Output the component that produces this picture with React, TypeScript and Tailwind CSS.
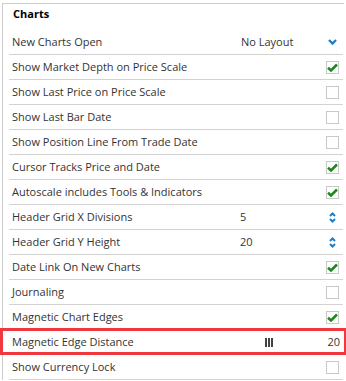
import React from "react";

type Row = {
  label: string;
  kind: "check" | "select" | "spin" | "slider";
  checked?: boolean;
  value?: string;
  highlight?: boolean;
};

const rows: Row[] = [
  { label: "New Charts Open", kind: "select", value: "No Layout" },
  { label: "Show Market Depth on Price Scale", kind: "check", checked: true },
  { label: "Show Last Price on Price Scale", kind: "check" },
  { label: "Show Last Bar Date", kind: "check" },
  { label: "Show Position Line From Trade Date", kind: "check" },
  { label: "Cursor Tracks Price and Date", kind: "check", checked: true },
  { label: "Autoscale includes Tools & Indicators", kind: "check", checked: true },
  { label: "Header Grid X Divisions", kind: "spin", value: "5" },
  { label: "Header Grid Y Height", kind: "spin", value: "20" },
  { label: "Date Link On New Charts", kind: "check", checked: true },
  { label: "Journaling", kind: "check" },
  { label: "Magnetic Chart Edges", kind: "check", checked: true },
  { label: "Magnetic Edge Distance", kind: "slider", value: "20", highlight: true },
  { label: "Show Currency Lock", kind: "check" },
];

function Checkbox({ checked }: { checked?: boolean }) {
  return (
    <div className="w-[13px] h-[13px] border border-[#c9c9c9] bg-white flex items-center justify-center">
      {checked && (
        <svg width="11" height="9" viewBox="0 0 11 9">
          <path d="M1 4.8 L4 7.5 L10 1.5" fill="none" stroke="#1c8a1c" strokeWidth="2.6" strokeLinejoin="miter" />
        </svg>
      )}
    </div>
  );
}

const Chevron = () => (
  <svg width="9" height="6" viewBox="0 0 9 6">
    <path d="M1 1 L4.5 4.5 L8 1" fill="none" stroke="#1f7dc8" strokeWidth="2.4" />
  </svg>
);

const Spinner = () => (
  <svg width="7" height="11" viewBox="0 0 7 11">
    <path d="M1 4 L3.5 1.5 L6 4" fill="none" stroke="#1f7dc8" strokeWidth="2" />
    <path d="M1 7 L3.5 9.5 L6 7" fill="none" stroke="#1f7dc8" strokeWidth="2" />
  </svg>
);

export default function App() {
  return (
    <div
      className="w-[346px] h-[381px] bg-white overflow-hidden pt-[3px] text-[11px] text-[#333]"
      style={{ fontFamily: '"Open Sans", "Liberation Sans", sans-serif' }}
    >
      <div className="ml-[2px] w-[342px] border-l border-t border-[#cccccc] pl-[6px]">
        <div className="h-[26px] pt-[2px] pl-[4px] font-bold text-black">Charts</div>
        {rows.map((r) => (
          <div
            key={r.label}
            className="relative h-[25px] w-[334px] border-b border-[#d2d2d2] flex items-center pl-[3px]"
          >
            <span className="flex-1 whitespace-nowrap">{r.label}</span>
            {r.kind === "check" && (
              <div className="w-[13px] flex justify-center mr-[4px]">
                <Checkbox checked={r.checked} />
              </div>
            )}
            {r.kind === "select" && (
              <>
                <span className="absolute left-[232px]">{r.value}</span>
                <div className="w-[13px] flex justify-center mr-[4px]">
                  <Chevron />
                </div>
              </>
            )}
            {r.kind === "spin" && (
              <>
                <span className="absolute left-[231px]">{r.value}</span>
                <div className="w-[13px] flex justify-center mr-[4px]">
                  <Spinner />
                </div>
              </>
            )}
            {r.kind === "slider" && (
              <>
                <div className="absolute left-[256px] top-[8px] flex gap-[1px]">
                  <div className="w-[2px] h-[9px] bg-[#444]" />
                  <div className="w-[2px] h-[9px] bg-[#444]" />
                  <div className="w-[2px] h-[9px] bg-[#444]" />
                </div>
                <span className="mr-[3px]">{r.value}</span>
              </>
            )}
            {r.highlight && (
              <div className="absolute left-[-9px] right-[-4px] top-[-2px] bottom-[-1px] border-[3px] border-[#f0393e] pointer-events-none" />
            )}
          </div>
        ))}
      </div>
    </div>
  );
}
